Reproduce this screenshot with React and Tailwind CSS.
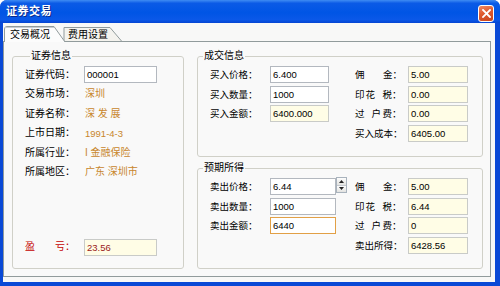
import React from "react";

const FONT = "font-['Liberation_Sans','Noto_Sans_CJK_SC',sans-serif]";

function Box({ value, className }) {
  return (
    <div
      className={
        "h-[17px] flex items-center pl-[2px] text-[9.5px] leading-none border " +
        className
      }
    >
      {value}
    </div>
  );
}

function LeftRow({ label, children }) {
  return (
    <div className="flex items-center h-[19.5px]">
      <span className="w-[59px] shrink-0 text-[10px] leading-none whitespace-pre">{label}</span>
      {children}
    </div>
  );
}

function RRow({ label, children, lw }) {
  return (
    <div className="flex items-center h-[19.5px]">
      <span className={"shrink-0 text-[9.5px] leading-none whitespace-pre " + lw}>{label}</span>
      {children}
    </div>
  );
}

function FeeRow({ kind, children }) {
  let label;
  if (kind === "yj") {
    label = (
      <>
        <span>佣</span>
        <span className="ml-[18.5px]">金：</span>
      </>
    );
  } else if (kind === "yh") {
    label = (
      <>
        <span>印</span>
        <span className="ml-[1px]">花</span>
        <span className="ml-[7.5px]">税：</span>
      </>
    );
  } else {
    label = (
      <>
        <span>过</span>
        <span className="ml-[7px]">户</span>
        <span className="ml-[1.5px]">费：</span>
      </>
    );
  }
  return (
    <div className="flex items-center h-[19.5px]">
      <span className="w-[53px] shrink-0 flex text-[9.5px] leading-none">{label}</span>
      {children}
    </div>
  );
}

function Spinner() {
  return (
    <div className="w-[11px] h-[16px] flex flex-col border border-[#a9b3bd] bg-[#f0f0ee] self-start">
      <div className="flex-1 flex items-center justify-center border-b border-[#c5c9cf] bg-[linear-gradient(#fdfdfd,#e3e3e0)]">
        <svg width="5" height="3" viewBox="0 0 5 3"><path d="M2.5 0L5 3H0z" fill="#222" /></svg>
      </div>
      <div className="flex-1 flex items-center justify-center bg-[linear-gradient(#fdfdfd,#e3e3e0)]">
        <svg width="5" height="3" viewBox="0 0 5 3"><path d="M0 0H5L2.5 3z" fill="#222" /></svg>
      </div>
    </div>
  );
}

const W = "bg-white border-[#b3b8bf]";
const Y = "bg-[#fffde6] border-[#c9cbc8]";

export default function App() {
  return (
    <div className={"w-[500px] h-[286px] flex flex-col bg-[#0a49d6] rounded-t-[7px] overflow-hidden " + FONT}>
      {/* title bar */}
      <div className="h-[23px] shrink-0 flex items-center justify-between pl-[6px] pr-[6px] bg-[linear-gradient(180deg,#3f8cf3_0%,#0b5ae6_14%,#0055e5_55%,#0a58e8_85%,#0545d2_100%)]">
        <span className="text-white font-bold text-[11px] leading-none tracking-[0.5px] [text-shadow:1px_1px_0_#0a2a8a]">证券交易</span>
        <div className="w-[16px] h-[17px] mt-[3px] rounded-[3px] border border-white flex items-center justify-center bg-[linear-gradient(160deg,#f08a64_0%,#df5a2e_45%,#c8441b_100%)]">
          <svg width="9" height="9" viewBox="0 0 9 9">
            <path d="M1 1L8 8M8 1L1 8" stroke="white" strokeWidth="1.8" strokeLinecap="square" />
          </svg>
        </div>
      </div>

      {/* client */}
      <div className="flex-1 flex flex-col ml-[3px] mr-[5px] mb-[4px] bg-[#f8f8f7]">
        {/* tabs */}
        <div className="h-[18px] shrink-0 flex items-end pl-[1px] pt-[3px]">
          <div className="relative z-10 w-[62px] h-[16px] mb-[-1px]">
            <svg className="absolute inset-0" width="62" height="16" viewBox="0 0 62 16">
              <path d="M0.5 16V3Q0.5 0.5 3 0.5H50L61 16" fill="#fcfcfc" stroke="#919b9c" />
              <path d="M1 1.5H50" stroke="#c7cbd1" />
            </svg>
            <span className="relative block pl-[6px] pt-[2px] text-[10px] leading-[14px]">交易概况</span>
          </div>
          <div className="relative w-[62px] h-[14px] ml-[-6px]">
            <svg className="absolute inset-0" width="62" height="14" viewBox="0 0 62 14">
              <path d="M4 14V0.5H50L61.5 14" fill="#f4f3ee" stroke="#919b9c" />
            </svg>
            <span className="relative block pl-[8px] pt-[1px] text-[10px] leading-[13px]">费用设置</span>
          </div>
        </div>

        {/* panel */}
        <div className="flex-1 mr-[4px] mb-[5px] border border-[#919b9c] bg-[#f9f9f9] flex gap-[13px] pl-[8px] pt-[7px]">
          {/* left group */}
          <fieldset className="w-[172px] h-[220px] border border-[#d0d0c8] rounded-[3px] flex flex-col pl-[12px] pb-[11px]">
            <legend className="ml-[5px] px-[1px] text-[10px] leading-[14px]">证券信息</legend>
            <div className="mt-[2px] flex flex-col">
              <LeftRow label="证券代码：">
                <Box value="000001" className={W + " w-[73px]"} />
              </LeftRow>
              <LeftRow label="交易市场：">
                <span className="text-[10px] leading-none text-[#c8862c] pl-[1px]">深圳</span>
              </LeftRow>
              <LeftRow label="证券名称：">
                <span className="text-[10px] leading-none text-[#c8862c] pl-[1px]">深 发 展</span>
              </LeftRow>
              <LeftRow label="上市日期：">
                <span className="text-[9.5px] leading-none text-[#c8862c] pl-[1px]">1991-4-3</span>
              </LeftRow>
              <LeftRow label="所属行业：">
                <span className="text-[10px] leading-none text-[#c8862c] pl-[1px]">I 金融保险</span>
              </LeftRow>
              <LeftRow label="所属地区：">
                <span className="text-[10px] leading-none text-[#c8862c] pl-[1px]">广东 深圳市</span>
              </LeftRow>
            </div>
            <div className="mt-auto flex items-center h-[19.5px]">
              <span className="w-[59px] shrink-0 flex text-[10px] leading-none text-[#c40000]">
                <span>盈</span>
                <span className="ml-[20px]">亏：</span>
              </span>
              <Box value="23.56" className={Y + " w-[73px] text-[#9a1a1a]"} />
            </div>
          </fieldset>

          {/* right groups */}
          <div className="flex flex-col gap-[4px]">
            <fieldset className="w-[286px] h-[108px] border border-[#d0d0c8] rounded-[3px] flex">
              <legend className="ml-[5px] px-[1px] text-[10px] leading-[14px]">成交信息</legend>
              <div className="w-[157px] pl-[12px] mt-[2px] flex flex-col">
                <RRow label="买入价格：" lw="w-[60px]">
                  <Box value="6.400" className={W + " w-[59px]"} />
                </RRow>
                <RRow label="买入数量：" lw="w-[60px]">
                  <Box value="1000" className={W + " w-[59px]"} />
                </RRow>
                <RRow label="买入金额：" lw="w-[60px]">
                  <Box value="6400.000" className={Y + " w-[59px]"} />
                </RRow>
              </div>
              <div className="mt-[2px] flex flex-col">
                <FeeRow kind="yj">
                  <Box value="5.00" className={Y + " w-[60px]"} />
                </FeeRow>
                <FeeRow kind="yh">
                  <Box value="0.00" className={Y + " w-[60px]"} />
                </FeeRow>
                <FeeRow kind="gh">
                  <Box value="0.00" className={Y + " w-[60px]"} />
                </FeeRow>
                <RRow label="买入成本：" lw="w-[53px]">
                  <Box value="6405.00" className={Y + " w-[60px]"} />
                </RRow>
              </div>
            </fieldset>

            <fieldset className="w-[286px] h-[108px] border border-[#d0d0c8] rounded-[3px] flex">
              <legend className="ml-[5px] px-[1px] text-[10px] leading-[14px]">预期所得</legend>
              <div className="w-[157px] pl-[12px] mt-[2px] flex flex-col">
                <RRow label="卖出价格：" lw="w-[60px]">
                  <Box value="6.44" className={W + " w-[66px]"} />
                  <Spinner />
                </RRow>
                <RRow label="卖出数量：" lw="w-[60px]">
                  <Box value="1000" className={W + " w-[66px]"} />
                </RRow>
                <RRow label="卖出金额：" lw="w-[60px]">
                  <Box value="6440" className="bg-white border-[#e2a046] w-[66px]" />
                </RRow>
              </div>
              <div className="mt-[2px] flex flex-col">
                <FeeRow kind="yj">
                  <Box value="5.00" className={Y + " w-[60px]"} />
                </FeeRow>
                <FeeRow kind="yh">
                  <Box value="6.44" className={Y + " w-[60px]"} />
                </FeeRow>
                <FeeRow kind="gh">
                  <Box value="0" className={Y + " w-[60px]"} />
                </FeeRow>
                <RRow label="卖出所得：" lw="w-[53px]">
                  <Box value="6428.56" className={Y + " w-[60px]"} />
                </RRow>
              </div>
            </fieldset>
          </div>
        </div>
      </div>
    </div>
  );
}
